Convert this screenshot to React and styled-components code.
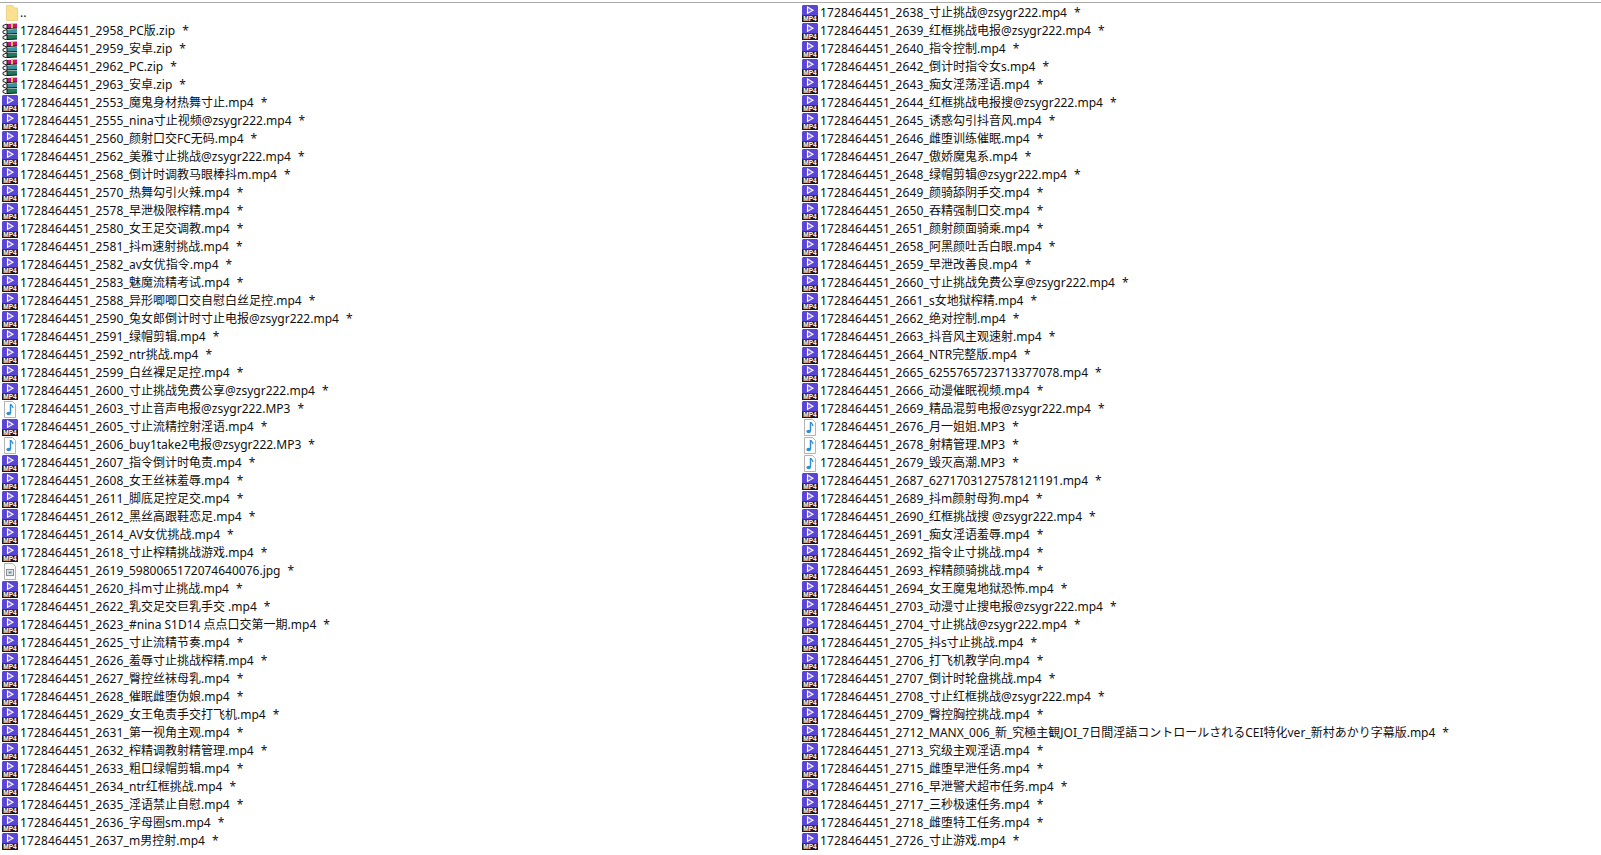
import React from 'react'
import styled, { createGlobalStyle } from 'styled-components'

const Global = createGlobalStyle`
  html, body {
    margin: 0;
    padding: 0;
    background: #fff;
    overflow: hidden;
  }
`

const Panel = styled.div`
  width: 1601px;
  height: 855px;
  overflow: hidden;
  background: #fff;
  color: #111;
  font-family: "Noto Sans", "Noto Sans CJK SC", sans-serif;
  font-size: 12px;
`

const TopEdge = styled.div`
  height: 1px;
  margin-top: 2px;
  background: #a8a8a8;
`

const Columns = styled.div`
  display: grid;
  grid-template-columns: 800px 1fr;
  padding-top: 1px;
`

const Column = styled.div`
  display: flex;
  flex-direction: column;
  padding-left: 2px;
`

const Row = styled.div`
  display: flex;
  align-items: center;
  gap: 2px;
  height: 18px;
  white-space: pre;
`

const Name = styled.span`
  line-height: 18px;
`

// the id prefix runs a touch wider than this font's digits
const Prefix = styled.span`
  letter-spacing: .14px;
`

const Star = styled.span`
  margin-left: 5px;
  line-height: 18px;
`

const Up = () => (
  <svg width="16" height="18" viewBox="0 0 16 18">
    <path d="M4.500 1.500h6l2 2.500h3v12.500h-11z" fill="#fbe08f" stroke="#ecd28a" />
  </svg>
)

const Zip = () => (
  <svg width="16" height="17" viewBox="0 0 16 17">
    <path d="M5 1l10-.500v4.500l-10 .5z" fill="#c4157a" />
    <path d="M5 6.500l10-.5v4.500l-10 .5z" fill="#3a8fa0" />
    <path d="M5 12l10-.5v4.500l-10 .5z" fill="#1b7a5a" />
    <path d="M1 2.500l4-1.500v5l-4-1.500zM1 8l4-1.500v5l-4-1.500zM1 13.500l4-1.500v5l-4-1.500z" fill="#f4f4f4" stroke="#111" strokeWidth=".9" />
    <path d="M5 5.500l10-.5M5 11l10-.5M5 16.500l10-.5" stroke="#111" />
    <path d="M9 .8h2v4.500H9z" fill="#e8b850" />
  </svg>
)

const Mp4 = () => (
  <svg width="16" height="17" viewBox="0 0 16 17">
    <path d="M1 0h14l1 1v10H0V1z" fill="#5b45d6" />
    <path d="M5.500 2l5.500 3.200-5.500 3.200z" fill="#7c6cf0" stroke="#fff" strokeWidth="1.100" />
    <rect x="0" y="10.500" width="16" height="6.500" fill="#191923" />
    <text x="8" y="16" textAnchor="middle" fontFamily="Liberation Sans" fontWeight="700" fontSize="6.500" fill="#fff">MP4</text>
  </svg>
)

const Mp3 = () => (
  <svg width="16" height="17" viewBox="0 0 16 17">
    <path d="M2.500.5h8l3 3v13h-11z" fill="#fff" stroke="#b4b4b4" />
    <path d="M8.500 3v9" stroke="#2b8fd0" strokeWidth="1.500" />
    <path d="M8.500 3c.5 1.500 2.500 2 2.500 4" fill="none" stroke="#2b8fd0" strokeWidth="1.200" />
    <ellipse cx="6.700" cy="12.500" rx="2.300" ry="1.800" fill="#2b8fd0" />
  </svg>
)

const Jpg = () => (
  <svg width="16" height="17" viewBox="0 0 16 17">
    <path d="M2.500.5h8l3 3v13h-11z" fill="#fafafa" stroke="#b4b4b4" />
    <rect x="4.500" y="6.500" width="7" height="6" fill="#dfe6ea" stroke="#8a9299" />
    <rect x="6.500" y="8.500" width="3" height="2" fill="#7f8a92" />
  </svg>
)

const icons = { zip: Zip, mp4: Mp4, mp3: Mp3, jpg: Jpg }

const left = [
  '..',
  '2958_PC版.zip',
  '2959_安卓.zip',
  '2962_PC.zip',
  '2963_安卓.zip',
  '2553_魔鬼身材热舞寸止.mp4',
  '2555_nina寸止视频@zsygr222.mp4',
  '2560_颜射口交FC无码.mp4',
  '2562_美雅寸止挑战@zsygr222.mp4',
  '2568_倒计时调教马眼棒抖m.mp4',
  '2570_热舞勾引火辣.mp4',
  '2578_早泄极限榨精.mp4',
  '2580_女王足交调教.mp4',
  '2581_抖m速射挑战.mp4',
  '2582_av女优指令.mp4',
  '2583_魅魔流精考试.mp4',
  '2588_异形唧唧口交自慰白丝足控.mp4',
  '2590_兔女郎倒计时寸止电报@zsygr222.mp4',
  '2591_绿帽剪辑.mp4',
  '2592_ntr挑战.mp4',
  '2599_白丝裸足足控.mp4',
  '2600_寸止挑战免费公享@zsygr222.mp4',
  '2603_寸止音声电报@zsygr222.MP3',
  '2605_寸止流精控射淫语.mp4',
  '2606_buy1take2电报@zsygr222.MP3',
  '2607_指令倒计时龟责.mp4',
  '2608_女王丝袜羞辱.mp4',
  '2611_脚底足控足交.mp4',
  '2612_黑丝高跟鞋恋足.mp4',
  '2614_AV女优挑战.mp4',
  '2618_寸止榨精挑战游戏.mp4',
  '2619_5980065172074640076.jpg',
  '2620_抖m寸止挑战.mp4',
  '2622_乳交足交巨乳手交 .mp4',
  '2623_#nina S1D14 点点口交第一期.mp4',
  '2625_寸止流精节奏.mp4',
  '2626_羞辱寸止挑战榨精.mp4',
  '2627_臀控丝袜母乳.mp4',
  '2628_催眠雌堕伪娘.mp4',
  '2629_女王龟责手交打飞机.mp4',
  '2631_第一视角主观.mp4',
  '2632_榨精调教射精管理.mp4',
  '2633_粗口绿帽剪辑.mp4',
  '2634_ntr红框挑战.mp4',
  '2635_淫语禁止自慰.mp4',
  '2636_字母圈sm.mp4',
  '2637_m男控射.mp4',
]

const right = [
  '2638_寸止挑战@zsygr222.mp4',
  '2639_红框挑战电报@zsygr222.mp4',
  '2640_指令控制.mp4',
  '2642_倒计时指令女s.mp4',
  '2643_痴女淫荡淫语.mp4',
  '2644_红框挑战电报搜@zsygr222.mp4',
  '2645_诱惑勾引抖音风.mp4',
  '2646_雌堕训练催眠.mp4',
  '2647_傲娇魔鬼系.mp4',
  '2648_绿帽剪辑@zsygr222.mp4',
  '2649_颜骑舔阴手交.mp4',
  '2650_吞精强制口交.mp4',
  '2651_颜射颜面骑乘.mp4',
  '2658_阿黑颜吐舌白眼.mp4',
  '2659_早泄改善良.mp4',
  '2660_寸止挑战免费公享@zsygr222.mp4',
  '2661_s女地狱榨精.mp4',
  '2662_绝对控制.mp4',
  '2663_抖音风主观速射.mp4',
  '2664_NTR完整版.mp4',
  '2665_6255765723713377078.mp4',
  '2666_动漫催眠视频.mp4',
  '2669_精品混剪电报@zsygr222.mp4',
  '2676_月一姐姐.MP3',
  '2678_射精管理.MP3',
  '2679_毁灭高潮.MP3',
  '2687_6271703127578121191.mp4',
  '2689_抖m颜射母狗.mp4',
  '2690_红框挑战搜 @zsygr222.mp4',
  '2691_痴女淫语羞辱.mp4',
  '2692_指令止寸挑战.mp4',
  '2693_榨精颜骑挑战.mp4',
  '2694_女王魔鬼地狱恐怖.mp4',
  '2703_动漫寸止搜电报@zsygr222.mp4',
  '2704_寸止挑战@zsygr222.mp4',
  '2705_抖s寸止挑战.mp4',
  '2706_打飞机教学向.mp4',
  '2707_倒计时轮盘挑战.mp4',
  '2708_寸止红框挑战@zsygr222.mp4',
  '2709_臀控胸控挑战.mp4',
  '2712_MANX_006_新_究極主観JOI_7日間淫語コントロールされるCEI特化ver_新村あかり字幕版.mp4',
  '2713_究级主观淫语.mp4',
  '2715_雌堕早泄任务.mp4',
  '2716_早泄警犬超市任务.mp4',
  '2717_三秒极速任务.mp4',
  '2718_雌堕特工任务.mp4',
  '2726_寸止游戏.mp4',
]

const FileRow = ({ name }) => {
  if (name === '..') {
    return <Row><Up /><Name>..</Name></Row>
  }
  const Icon = icons[name.split('.').pop().toLowerCase()]
  const id = name.slice(0, 5)
  return (
    <Row>
      <Icon />
      <Name><Prefix>1728464451_{id}</Prefix>{name.slice(5)}</Name>
      <Star>*</Star>
    </Row>
  )
}

export default function App() {
  return (
    <Panel>
      <Global />
      <TopEdge />
      <Columns>
        <Column>{left.map(name => <FileRow key={name} name={name} />)}</Column>
        <Column>{right.map(name => <FileRow key={name} name={name} />)}</Column>
      </Columns>
    </Panel>
  )
}
